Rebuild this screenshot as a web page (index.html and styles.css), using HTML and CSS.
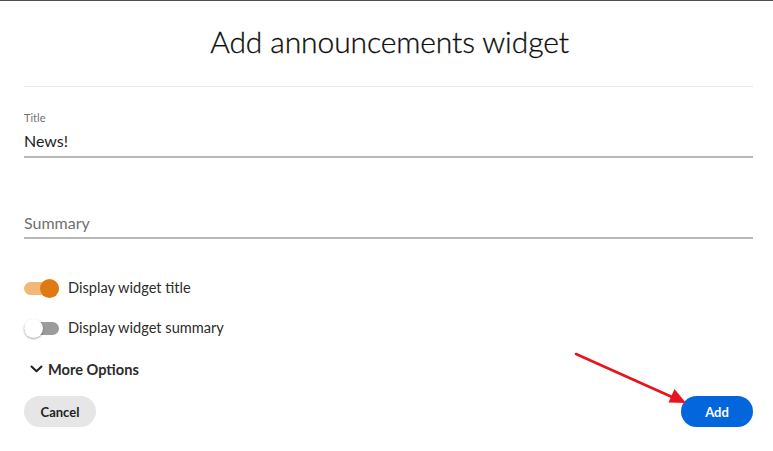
FILE: index.html
```html
<!DOCTYPE html>
<html lang="en">
<head>
<meta charset="utf-8">
<title>Add announcements widget</title>
<link rel="stylesheet" href="styles.css">
</head>
<body>
<div class="dialog">
  <h1 class="dialog-title">Add announcements widget</h1>
  <div class="divider"></div>

  <div class="field">
    <label class="field-label">Title</label>
    <div class="field-input">News!</div>
  </div>

  <div class="field field-summary">
    <div class="field-input placeholder">Summary</div>
  </div>

  <div class="switch-row first">
    <span class="switch on"><span class="track"></span><span class="knob"></span></span>
    <span class="switch-label">Display widget title</span>
  </div>

  <div class="switch-row">
    <span class="switch off"><span class="track"></span><span class="knob"></span></span>
    <span class="switch-label">Display widget summary</span>
  </div>

  <div class="more-options">
    <svg class="chevron" width="13" height="8" viewBox="0 0 13 8"><path d="M1.5 1.5 L6.5 6.3 L11.5 1.5" fill="none" stroke="#222" stroke-width="2" stroke-linecap="round" stroke-linejoin="round"/></svg>
    <span>More Options</span>
  </div>

  <div class="footer">
    <button class="btn btn-secondary">Cancel</button>
    <button class="btn btn-primary">Add</button>
  </div>
</div>

<svg class="annotation" width="773" height="451" viewBox="0 0 773 451">
  <line x1="576" y1="354" x2="672" y2="397" stroke="#e8141c" stroke-width="2.6" stroke-linecap="round"/>
  <polygon points="686,403 668.5,402.5 674.5,389" fill="#e8141c"/>
</svg>
</body>
</html>
```
FILE: styles.css
```css
html, body {
  margin: 0;
  padding: 0;
  background: #ffffff;
}

body {
  font-family: Lato, "Open Sans", "Liberation Sans", sans-serif;
  color: #222222;
  border-top: 1px solid #4f4f4f;
  width: 773px;
  height: 450px;
  overflow: hidden;
  position: relative;
}

.dialog {
  display: flex;
  flex-direction: column;
  padding: 0 20px 0 24px;
}

.dialog-title {
  margin: 22px 0 0 0;
  font-size: 30px;
  line-height: 36px;
  font-weight: 300;
  text-align: center;
  color: #0d0d0d;
  letter-spacing: -0.1px;
  padding-left: 2px;
  -webkit-text-stroke: 0.3px #0d0d0d;
}

.divider {
  margin-top: 27px;
  height: 1px;
  background: #e6e6e6;
}

.field {
  display: flex;
  flex-direction: column;
}

.field-label {
  margin-top: 24px;
  font-size: 11px;
  line-height: 13px;
  color: #707070;
}

.field-input {
  margin-top: 7px;
  font-size: 16px;
  line-height: 20px;
  padding-bottom: 5px;
  border-bottom: 2px solid #b8b8b8;
  color: #222222;
}

.field-summary .field-input {
  margin-top: 55px;
  padding-bottom: 4px;
}

.placeholder {
  color: #707070;
}

.switch-row {
  display: flex;
  align-items: center;
  gap: 9px;
  height: 20px;
  margin-top: 20px;
}

.switch-row.first {
  margin-top: 39px;
}

.switch {
  position: relative;
  width: 35px;
  height: 20px;
  flex: none;
}

.switch .track {
  position: absolute;
  left: 0;
  top: 4px;
  width: 35px;
  height: 13px;
  border-radius: 7px;
}

.switch .knob {
  position: absolute;
  top: 1px;
  width: 19px;
  height: 19px;
  border-radius: 50%;
}

.switch.on .track {
  background: #f2b877;
}

.switch.on .knob {
  left: 16px;
  background: #df7a12;
}

.switch.off .track {
  background: #9b9b9b;
}

.switch.off .knob {
  left: 0;
  background: #ffffff;
  box-shadow: 0 1px 2px rgba(0, 0, 0, 0.35);
}

.switch-label {
  font-size: 14.6px;
  line-height: 20px;
  color: #2c2c2c;
}

.more-options {
  display: flex;
  align-items: center;
  gap: 5px;
  margin-top: 21px;
  padding-left: 6px;
  height: 20px;
  font-size: 14.6px;
  font-weight: 700;
  color: #2c2c2c;
}

.chevron {
  display: block;
}

.footer {
  display: flex;
  justify-content: space-between;
  margin-top: 17px;
}

.btn {
  height: 31px;
  width: 72px;
  border: none;
  border-radius: 16px;
  font-family: Lato, "Open Sans", "Liberation Sans", sans-serif;
  font-size: 13px;
  font-weight: 700;
  padding: 0;
}

.btn-secondary {
  background: #e6e6e6;
  color: #222222;
}

.btn-primary {
  background: #0366dc;
  color: #ffffff;
}

.annotation {
  position: absolute;
  left: 0;
  top: -1px;
  pointer-events: none;
}
```
